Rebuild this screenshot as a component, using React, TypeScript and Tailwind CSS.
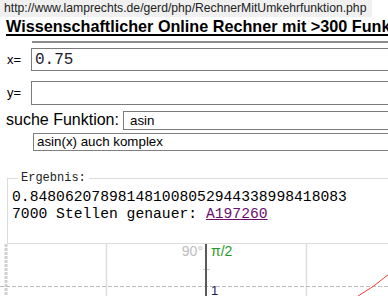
export default function App() {
  return (
    <div className="w-[388px] h-[297px] overflow-hidden bg-white font-['Liberation_Sans',Arial,sans-serif] text-black">
      {/* Address */}
      <div className="h-[17px] w-[372px] bg-[#f0f0f0] pl-[4px] text-[12.2px] leading-[17px] text-[#222] whitespace-nowrap overflow-hidden">
        http://www.lamprechts.de/gerd/php/RechnerMitUmkehrfunktion.php
      </div>

      {/* Title */}
      <div className="pl-[6px] pt-[1px] leading-[17px] whitespace-nowrap">
        <span className="text-[16.2px] leading-[17px] font-bold underline decoration-2 underline-offset-[2px]">
          Wissenschaftlicher Online Rechner mit &gt;300 Funktionen
        </span>
      </div>

      <div className="ml-[32px] mt-[6px] h-[2px] w-[600px] bg-[#8a8a8a]" />

      {/* x / y */}
      <div className="mt-[5px] flex items-center">
        <span className="w-[31px] shrink-0 pl-[7px] text-[13px]">x=</span>
        <input
          readOnly
          value="0.75"
          className="h-[23px] w-[500px] shrink-0 border border-[#7a7a7a] px-[3px] font-['Liberation_Mono',monospace] text-[16px] text-[#1c1c2c] outline-none"
        />
      </div>
      <div className="mt-[10px] flex items-center">
        <span className="w-[31px] shrink-0 pl-[7px] text-[13px]">y=</span>
        <input
          readOnly
          value=""
          className="h-[24px] w-[500px] shrink-0 border border-[#7a7a7a] px-[3px] font-['Liberation_Mono',monospace] text-[16px] outline-none"
        />
      </div>

      {/* search */}
      <div className="mt-[6px] flex items-end">
        <span className="w-[123px] shrink-0 pl-[6px] text-[16px] leading-[18px] pb-[1px] whitespace-nowrap">
          suche Funktion:
        </span>
        <input
          readOnly
          value="asin"
          className="h-[19px] w-[400px] shrink-0 border border-[#7a7a7a] px-[6px] text-[13.33px] outline-none"
        />
      </div>
      <div className="ml-[33px] mt-[3px] h-[18px] w-[400px] border border-[#808080] px-[3px] text-[13.33px] leading-[16px] whitespace-nowrap">
        asin(x) auch komplex
      </div>

      {/* Ergebnis */}
      <fieldset className="ml-[7px] mt-[20px] h-[73px] w-[500px] border border-[#dcdcdc] pl-[4px] pt-[4px] font-['Liberation_Mono',monospace]">
        <legend className="ml-[6px] px-[3px] text-[12px] leading-[14px] text-[#222]">
          Ergebnis:
        </legend>
        <div className="text-[14.7px] leading-[17px] whitespace-nowrap">
          0.848062078981481008052944338998418083
        </div>
        <div className="text-[14.7px] leading-[17px] whitespace-nowrap">
          7000 Stellen genauer:{' '}
          <a href="#" className="text-[#6b0f6b] underline">
            A197260
          </a>
        </div>
      </fieldset>

      {/* Graph */}
      <svg width="388" height="52" className="block">
        <line x1="6" y1="0" x2="6" y2="52" stroke="#d0d0d0" strokeWidth="3" strokeDasharray="3 1" />
        <line x1="106.5" y1="0" x2="106.5" y2="52" stroke="#dcdcdc" strokeWidth="1.5" />
        <line x1="306.5" y1="0" x2="306.5" y2="52" stroke="#dcdcdc" strokeWidth="1.5" />
        <line x1="0" y1="42.5" x2="388" y2="42.5" stroke="#bdbdbd" strokeWidth="1.2" strokeDasharray="4 2" />
        <line x1="203" y1="25.5" x2="210" y2="25.5" stroke="#cfcfcf" strokeWidth="1" />
        <line x1="206" y1="0" x2="206" y2="52" stroke="#5a5a5a" strokeWidth="2" />
        <text x="203" y="12" textAnchor="end" fontSize="14" fill="#bdbdbd" fontFamily="Liberation Sans, Arial, sans-serif">
          90°
        </text>
        <text x="211" y="12" fontSize="14" fill="#1f9a1f" fontFamily="Liberation Sans, Arial, sans-serif">
          π/2
        </text>
        <text x="211" y="51" fontSize="13" fill="#1a1a60" fontFamily="Liberation Sans, Arial, sans-serif">
          1
        </text>
        <path d="M358 52 Q374 43 389 30" fill="none" stroke="#ff3b3b" strokeWidth="1" />
      </svg>
    </div>
  )
}
